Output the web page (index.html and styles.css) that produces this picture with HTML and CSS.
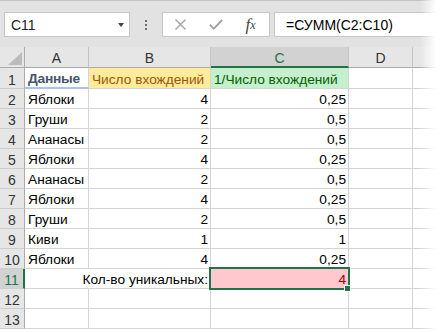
FILE: index.html
```
<!DOCTYPE html>
<html lang="ru">
<head>
<meta charset="utf-8">
<link rel="stylesheet" href="styles.css">
</head>
<body>
<div class="topbar">
  <div class="namebox"><span>C11</span><span class="arrow"></span></div>
  <div class="sep"><i></i><i></i><i></i></div>
  <div class="fbtns">
    <span class="btn"><svg width="11" height="11" viewBox="0 0 11 11"><path d="M0.5 0.5L10.5 10.5M10.5 0.5L0.5 10.5" stroke="#a3a3a3" stroke-width="1.4" fill="none"/></svg></span>
    <span class="btn"><svg width="14" height="11" viewBox="0 0 14 11"><path d="M0.8 5.6L4.8 9.6L13.2 1" stroke="#a3a3a3" stroke-width="1.8" fill="none"/></svg></span>
    <span class="btn fx"><i>f</i><sub>x</sub></span>
  </div>
  <div class="formula">=СУММ(С2:С10)</div>
</div>
<div class="sheet">
  <div class="c hd corner"><span class="tri"></span></div>
  <div class="c hd">A</div>
  <div class="c hd">B</div>
  <div class="c hd selh">C</div>
  <div class="c hd">D</div>
  <div class="c hd"></div>

  <div class="c rh r1">1</div>
  <div class="c h3 r1">Данные</div>
  <div class="c neutral r1">Число вхождений</div>
  <div class="c good r1">1/Число вхождений</div>
  <div class="c r1"></div>
  <div class="c r1"></div>

  <div class="c rh">2</div><div class="c">Яблоки</div><div class="c n">4</div><div class="c n">0,25</div><div class="c"></div><div class="c"></div>
  <div class="c rh">3</div><div class="c">Груши</div><div class="c n">2</div><div class="c n">0,5</div><div class="c"></div><div class="c"></div>
  <div class="c rh">4</div><div class="c">Ананасы</div><div class="c n">2</div><div class="c n">0,5</div><div class="c"></div><div class="c"></div>
  <div class="c rh">5</div><div class="c">Яблоки</div><div class="c n">4</div><div class="c n">0,25</div><div class="c"></div><div class="c"></div>
  <div class="c rh">6</div><div class="c">Ананасы</div><div class="c n">2</div><div class="c n">0,5</div><div class="c"></div><div class="c"></div>
  <div class="c rh">7</div><div class="c">Яблоки</div><div class="c n">4</div><div class="c n">0,25</div><div class="c"></div><div class="c"></div>
  <div class="c rh">8</div><div class="c">Груши</div><div class="c n">2</div><div class="c n">0,5</div><div class="c"></div><div class="c"></div>
  <div class="c rh">9</div><div class="c">Киви</div><div class="c n">1</div><div class="c n">1</div><div class="c"></div><div class="c"></div>
  <div class="c rh">10</div><div class="c">Яблоки</div><div class="c n">4</div><div class="c n">0,25</div><div class="c"></div><div class="c"></div>

  <div class="c rh selr">11</div>
  <div class="c n span2">Кол-во уникальных:</div>
  <div class="c n bad">4<span class="selbox"></span><span class="handle"></span></div>
  <div class="c"></div><div class="c"></div>

  <div class="c rh">12</div><div class="c"></div><div class="c"></div><div class="c"></div><div class="c"></div><div class="c"></div>
  <div class="c rh">13</div><div class="c"></div><div class="c"></div><div class="c"></div><div class="c"></div><div class="c"></div>
</div>
<div class="fade"></div>
</body>
</html>
```
FILE: styles.css
```
* { box-sizing: border-box; }
html, body { margin: 0; padding: 0; }
body {
  width: 440px;
  height: 332px;
  overflow: hidden;
  background: #fff;
  font-family: "Liberation Sans", Arial, sans-serif;
  font-size: 13.7px;
  color: #000;
  position: relative;
}
.topbar {
  height: 47px;
  background: #e2e2e2;
  border-top: 1px solid #c4c4c4;
  display: flex;
  align-items: flex-start;
  padding: 11px 0 0 4px;
}
.namebox {
  width: 126px;
  height: 25px;
  background: #fff;
  border: 1px solid #c6c6c6;
  display: flex;
  align-items: center;
  justify-content: space-between;
  padding: 0 5px 0 6px;
  font-size: 14px;
  color: #222;
}
.arrow {
  width: 0;
  height: 0;
  border-left: 3.5px solid transparent;
  border-right: 3.5px solid transparent;
  border-top: 4px solid #444;
  margin-top: 1px;
}
.sep {
  width: 32px;
  height: 25px;
  display: flex;
  flex-direction: column;
  align-items: center;
  justify-content: center;
  gap: 2px;
}
.sep i {
  display: block;
  width: 2px;
  height: 2px;
  background: #6f6f6f;
}
.fbtns {
  width: 108px;
  height: 25px;
  background: #fff;
  border: 1px solid #c6c6c6;
  display: grid;
  grid-template-columns: 35px 35px 35px;
  align-items: center;
  justify-items: center;
}
.btn { display: flex; align-items: center; justify-content: center; }
.fx {
  font-family: "Liberation Serif", "Times New Roman", serif;
  color: #444;
  font-size: 17px;
  line-height: 1;
}
.fx i { font-style: italic; }
.fx sub { font-size: 12px; font-style: italic; vertical-align: -1px; margin-left: 0; }
.formula {
  flex: 1;
  margin-left: 4px;
  height: 25px;
  background: #fff;
  border: 1px solid #c6c6c6;
  border-right: none;
  display: flex;
  align-items: center;
  padding-left: 11px;
  font-size: 14px;
}
.sheet {
  display: grid;
  grid-template-columns: 25px 64px 122px 138px 64px 28px;
  grid-template-rows: 21px 21px;
  grid-auto-rows: 20px;
}
.c {
  border-right: 1px solid #d4d4d4;
  border-bottom: 1px solid #d4d4d4;
  display: flex;
  align-items: flex-end;
  padding: 0 2px 0 3px;
  line-height: 16px;
  white-space: nowrap;
  position: relative;
}
.n { justify-content: flex-end; }
.hd {
  background: #e6e6e6;
  border-right: 1px solid #c3c3c3;
  border-bottom: 1px solid #ababab;
  justify-content: center;
  color: #333;
  padding: 0 0 1px 0;
  font-size: 14px;
}
.corner { border-right: 1px solid #ababab; position: relative; }
.tri {
  position: absolute;
  left: 8px;
  top: 5px;
  width: 14px;
  height: 13px;
  background: #bcbcbc;
  clip-path: polygon(100% 0, 100% 100%, 0 100%);
}
.selh {
  background: #d2d2d2;
  color: #217346;
  border-bottom: 2px solid #217346;
  padding-bottom: 0;
}
.rh {
  background: #e6e6e6;
  border-right: 1px solid #ababab;
  border-bottom: 1px solid #cdcdcd;
  justify-content: center;
  color: #333;
  padding: 0;
  font-size: 14px;
}
.selr {
  background: #d2d2d2;
  color: #217346;
  border-right: 2px solid #217346;
}
.h3 {
  font-weight: bold;
  color: #44546a;
  border-bottom: 2px solid #a9c4e8;
  letter-spacing: -0.2px;
}
.neutral { background: #ffeb9c; color: #9c5700; }
.good { background: #c6efce; color: #006100; }
.bad { background: #ffc7ce; color: #9c0006; z-index: 2; }
.span2 { grid-column: span 2; }
.selbox {
  position: absolute;
  left: -2px;
  top: -2px;
  width: 141px;
  height: 23px;
  border: 2px solid #217346;
}
.handle {
  position: absolute;
  left: 133px;
  top: 16px;
  width: 7px;
  height: 7px;
  background: #217346;
  border: 1px solid #fff;
}
.fade {
  position: absolute;
  top: 0;
  right: 0;
  width: 20px;
  height: 100%;
  z-index: 3;
  background: linear-gradient(to right, rgba(255,255,255,0), #fff 80%);
}
```
